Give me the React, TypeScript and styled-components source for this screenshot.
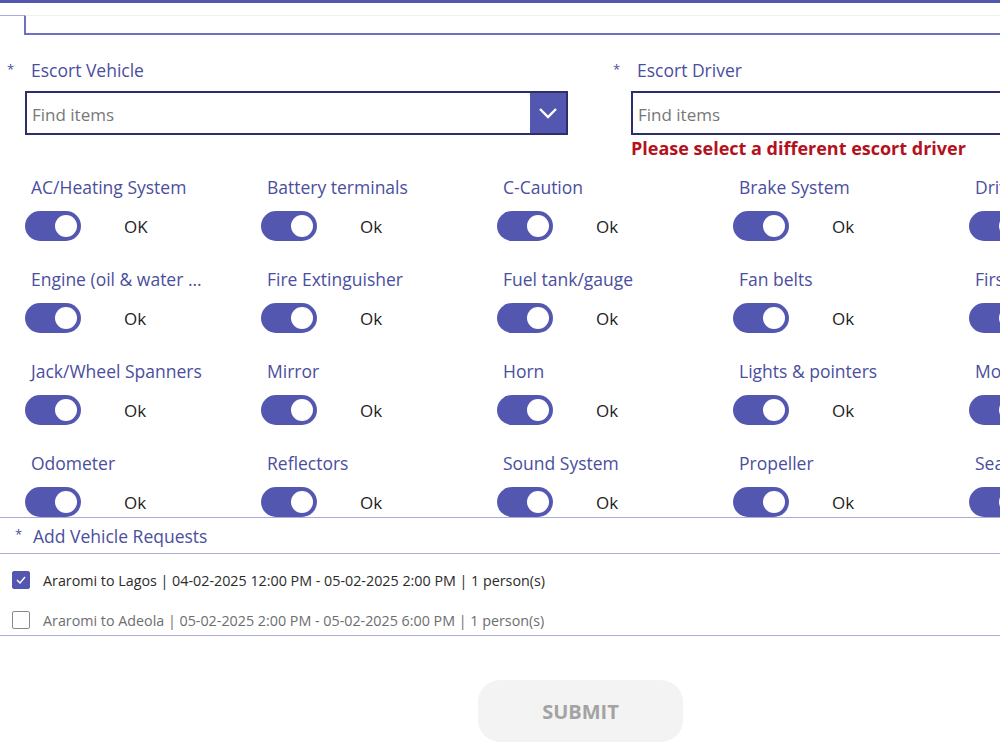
import styled, { createGlobalStyle } from 'styled-components';

const GlobalStyle = createGlobalStyle`
  body {
    margin: 0;
    background: #ffffff;
    font-family: 'Open Sans', 'Noto Sans', sans-serif;
    overflow: hidden;
  }
`;

const purple = '#5457b0';
const labelColor = '#4a4e9e';

const Page = styled.div`
  width: 1000px;
  height: 750px;
  overflow: hidden;
  background: #fff;
`;

const TopBar = styled.div`
  height: 3px;
  background: ${purple};
`;

const TabStrip = styled.div`
  display: flex;
  height: 32px;
`;

const TabStub = styled.div`
  width: 24px;
  margin-top: 12px;
  border-top: 1px solid #a9abdc;
`;

const TabBody = styled.div`
  flex: 1;
  margin-top: 12px;
  border-top: 1px solid #f0f0f0;
  border-left: 2px solid #6e71c2;
  border-bottom: 2px solid #6e71c2;
`;

const ScrollArea = styled.div`
  height: 482px;
  overflow: hidden;
  border-bottom: 1px solid #a9abdc;
`;

const FieldsRow = styled.div`
  display: flex;
  padding-top: 24px;
  width: 1300px;
`;

const Field = styled.div<{ $width: number }>`
  width: ${(p) => p.$width}px;
  flex-shrink: 0;
`;

const LabelRow = styled.div`
  display: flex;
  align-items: center;
  height: 22px;
  margin-left: 7px;
`;

const Star = styled.span<{ $width?: number }>`
  width: ${(p) => p.$width ?? 24}px;
  color: ${labelColor};
  font-size: 13px;
  margin-top: -3px;
`;

const Label = styled.span`
  color: ${labelColor};
  font-size: 17.5px;
  line-height: 22px;
`;

const Combo = styled.div<{ $width: number }>`
  display: flex;
  margin-top: 10px;
  margin-left: 25px;
  width: ${(p) => p.$width}px;
  height: 44px;
  box-sizing: border-box;
  border: 2px solid #2c2f6a;
  background: #fff;
`;

const ComboInput = styled.input`
  flex: 1;
  border: none;
  outline: none;
  padding: 2px 5px 0;
  font-family: 'Open Sans', sans-serif;
  font-size: 17px;
  color: #333;
  background: transparent;

  &::placeholder {
    color: #777;
  }
`;

const ChevronButton = styled.div`
  width: 36px;
  background: ${purple};
  display: flex;
  align-items: center;
  justify-content: center;
`;

const ErrorText = styled.div`
  margin-left: 25px;
  margin-top: 1px;
  color: #b3121c;
  font-size: 18px;
  font-weight: 700;
  line-height: 24px;
`;

const ToggleGrid = styled.div`
  display: grid;
  grid-template-columns: repeat(6, 236px);
  grid-auto-rows: 92px;
  padding-left: 25px;
  margin-top: 16px;
  width: 1500px;
`;

const Cell = styled.div`
  display: flex;
  flex-direction: column;
`;

const CellLabel = styled.div`
  color: ${labelColor};
  font-size: 17.5px;
  line-height: 22px;
  padding-left: 6px;
  white-space: nowrap;
`;

const ToggleRow = styled.div`
  display: flex;
  align-items: center;
  margin-top: 13px;
`;

const Track = styled.div`
  position: relative;
  width: 56px;
  height: 30px;
  border-radius: 15px;
  background: ${purple};
  flex-shrink: 0;
`;

const Knob = styled.div`
  position: absolute;
  top: 4px;
  right: 4px;
  width: 22px;
  height: 22px;
  border-radius: 50%;
  background: #fff;
`;

const ToggleText = styled.span`
  margin-left: 43px;
  font-size: 17px;
  color: #1e1e1e;
`;

const RequestsHeader = styled.div`
  display: flex;
  align-items: center;
  height: 35px;
  padding-left: 15px;
  border-bottom: 1px solid #a9abdc;
`;

const RequestList = styled.div`
  display: flex;
  flex-direction: column;
  gap: 12px;
  padding: 12px 0 1px 12px;
  border-bottom: 1px solid #a9abdc;
`;

const RequestRow = styled.label`
  display: flex;
  align-items: center;
  height: 28px;
  gap: 13px;
`;

const Box = styled.span<{ $checked: boolean }>`
  width: 18px;
  height: 18px;
  box-sizing: border-box;
  border-radius: 2px;
  display: flex;
  align-items: center;
  justify-content: center;
  background: ${(p) => (p.$checked ? purple : '#fff')};
  border: 1px solid ${(p) => (p.$checked ? purple : '#8a8a8a')};
`;

const RequestText = styled.span<{ $checked: boolean }>`
  font-size: 14.3px;
  color: ${(p) => (p.$checked ? '#2b2b2b' : '#6e6e6e')};
`;

const SubmitButton = styled.button`
  display: block;
  margin: 44px 0 0 478px;
  width: 205px;
  height: 62px;
  border: none;
  border-radius: 22px;
  background: #f3f3f3;
  color: #a3a3a3;
  font-family: 'Open Sans', sans-serif;
  font-size: 20px;
  font-weight: 700;
  cursor: default;
`;

const checks = [
  ['AC/Heating System', 'Battery terminals', 'C-Caution', 'Brake System', 'Driver seat', 'Doors'],
  ['Engine (oil & water ...', 'Fire Extinguisher', 'Fuel tank/gauge', 'Fan belts', 'First Aid Box', 'Gear'],
  ['Jack/Wheel Spanners', 'Mirror', 'Horn', 'Lights & pointers', 'Motor', 'Radio'],
  ['Odometer', 'Reflectors', 'Sound System', 'Propeller', 'Seat belts', 'Tyres'],
];

const requests = [
  { text: 'Araromi to Lagos | 04-02-2025 12:00 PM - 05-02-2025 2:00 PM | 1 person(s)', checked: true },
  { text: 'Araromi to Adeola | 05-02-2025 2:00 PM - 05-02-2025 6:00 PM | 1 person(s)', checked: false },
];

const Chevron = () => (
  <svg width="20" height="12" viewBox="0 0 20 12">
    <path d="M2 2 L10 10 L18 2" fill="none" stroke="#fff" strokeWidth="2.4" />
  </svg>
);

const Tick = () => (
  <svg width="10" height="8" viewBox="0 0 10 8">
    <path d="M1 4 L4 7 L9 1" fill="none" stroke="#fff" strokeWidth="1.4" />
  </svg>
);

const App = () => {
  return (
    <Page>
      <GlobalStyle />
      <TopBar />
      <TabStrip>
        <TabStub />
        <TabBody />
      </TabStrip>
      <ScrollArea>
        <FieldsRow>
          <Field $width={606}>
            <LabelRow>
              <Star>*</Star>
              <Label>Escort Vehicle</Label>
            </LabelRow>
            <Combo $width={543}>
              <ComboInput placeholder="Find items" />
              <ChevronButton>
                <Chevron />
              </ChevronButton>
            </Combo>
          </Field>
          <Field $width={620}>
            <LabelRow>
              <Star>*</Star>
              <Label>Escort Driver</Label>
            </LabelRow>
            <Combo $width={543}>
              <ComboInput placeholder="Find items" />
            </Combo>
            <ErrorText>Please select a different escort driver</ErrorText>
          </Field>
        </FieldsRow>
        <ToggleGrid>
          {checks.flatMap((row, r) =>
            row.map((name, c) => (
              <Cell key={name}>
                <CellLabel>{name}</CellLabel>
                <ToggleRow>
                  <Track>
                    <Knob />
                  </Track>
                  <ToggleText>{r === 0 && c === 0 ? 'OK' : 'Ok'}</ToggleText>
                </ToggleRow>
              </Cell>
            ))
          )}
        </ToggleGrid>
      </ScrollArea>
      <RequestsHeader>
        <Star $width={18}>*</Star>
        <Label>Add Vehicle Requests</Label>
      </RequestsHeader>
      <RequestList>
        {requests.map((req) => (
          <RequestRow key={req.text}>
            <Box $checked={req.checked}>{req.checked && <Tick />}</Box>
            <RequestText $checked={req.checked}>{req.text}</RequestText>
          </RequestRow>
        ))}
      </RequestList>
      <SubmitButton>SUBMIT</SubmitButton>
    </Page>
  );
};

export default App;
